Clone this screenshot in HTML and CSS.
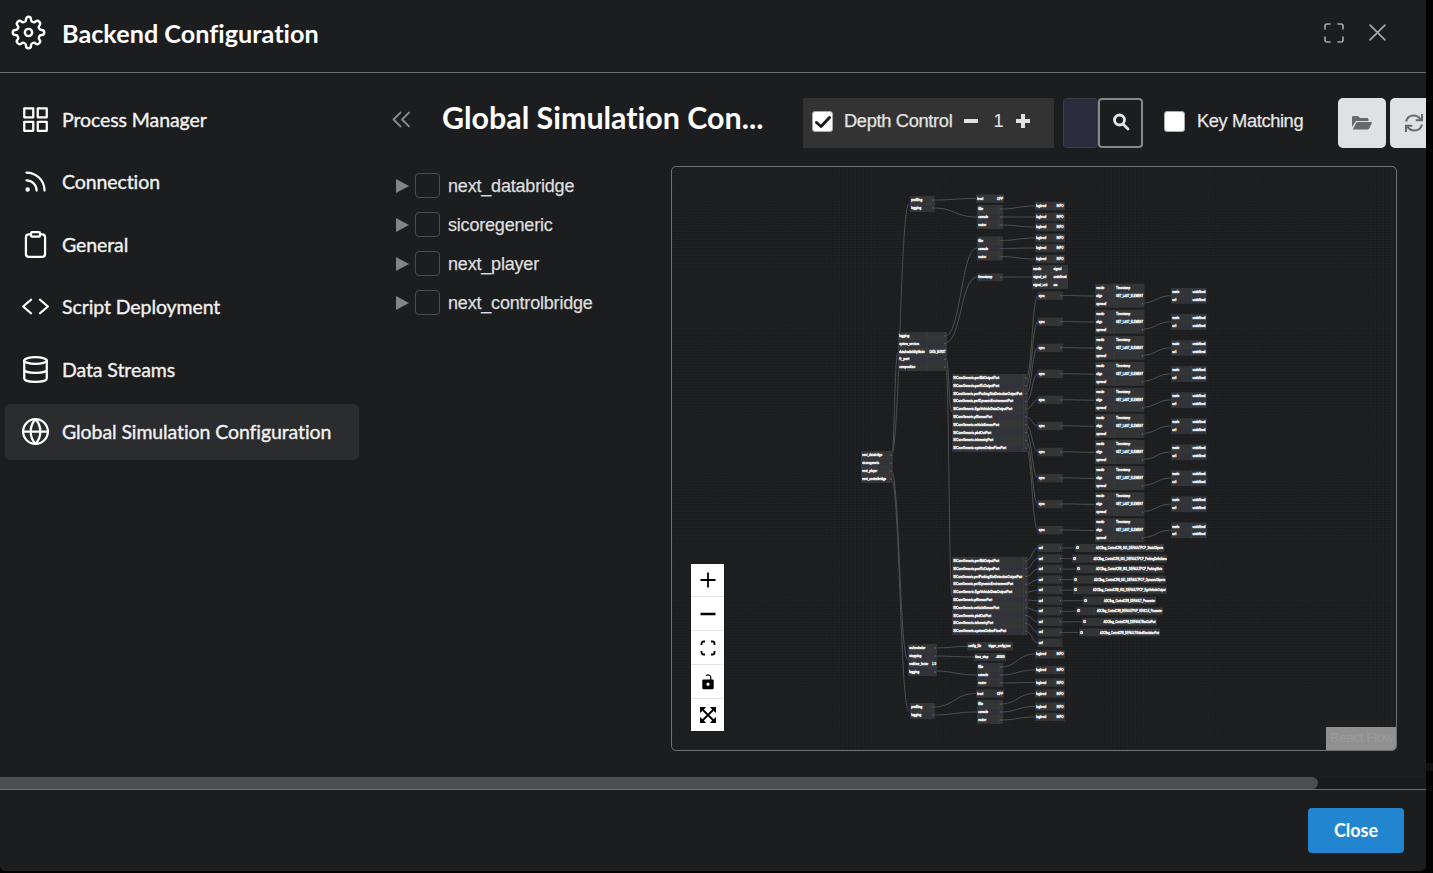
FILE: index.html
```html
<!DOCTYPE html>
<html lang="en">
<head>
<meta charset="utf-8">
<title>Backend Configuration</title>
<link rel="stylesheet" href="styles.css">
</head>
<body>
<div class="modal">
  <header class="modal-header">
    <svg class="gear" viewBox="0 0 24 24"><circle cx="12" cy="12" r="2.500"/><path d="M12 1.200c1 0 1.700.8 1.700 1.800 0 1.700 2 2.600 3.300 1.400 1.500-1.300 3.900 1 2.600 2.600C18.400 8.300 19.300 10.300 21 10.300c2.400 0 2.400 3.400 0 3.400-1.700 0-2.600 2-1.400 3.300 1.300 1.600-1 3.900-2.600 2.600-1.300-1.200-3.300-.3-3.300 1.400 0 2.400-3.400 2.400-3.400 0 0-1.700-2-2.600-3.300-1.400-1.600 1.300-3.900-1-2.600-2.600C5.600 15.700 4.700 13.700 3 13.700c-2.400 0-2.400-3.400 0-3.400 1.700 0 2.600-2 1.400-3.300C3.100 5.400 5.400 3.100 7 4.400 8.300 5.600 10.300 4.700 10.300 3c0-1 .7-1.800 1.700-1.800z"/></svg>
    <h1 class="modal-title">Backend Configuration</h1>
    <svg class="head-icon expand" viewBox="0 0 20 20"><path d="M1 6V3a2 2 0 0 1 2-2h3M14 1h3a2 2 0 0 1 2 2v3M19 14v3a2 2 0 0 1-2 2h-3M6 19H3a2 2 0 0 1-2-2v-3"/></svg>
    <svg class="head-icon close-x" viewBox="0 0 16 16"><path d="M1 1l14 14M15 1L1 15"/></svg>
  </header>

  <div class="modal-body">
    <nav class="sidebar">
      <a class="nav-item"><svg class="icon" viewBox="0 0 24 24"><path d="M2 2h8v8H2zM14 2h8v8h-8zM14 14h8v8h-8zM2 14h8v8H2z"/></svg><span>Process Manager</span></a>
      <a class="nav-item"><svg class="icon" viewBox="0 0 24 24"><path d="M4 11a9 9 0 0 1 9 9M4 4a16 16 0 0 1 16 16"/><circle cx="5" cy="19" r="1"/></svg><span>Connection</span></a>
      <a class="nav-item"><svg class="icon" viewBox="0 0 24 24"><path d="M16 3h2a2.500 2.500 0 0 1 2.500 2.500v15A2.500 2.500 0 0 1 18 23H6a2.500 2.500 0 0 1-2.500-2.500v-15A2.500 2.500 0 0 1 6 3h2"/><rect x="8" y="1" width="8" height="4" rx="1"/></svg><span>General</span></a>
      <a class="nav-item"><svg class="icon" viewBox="0 0 24 24"><path d="M16 18l7-6-7-6M8 6l-7 6 7 6"/></svg><span>Script Deployment</span></a>
      <a class="nav-item"><svg class="icon" viewBox="0 0 24 24"><ellipse cx="12" cy="4" rx="10" ry="3"/><path d="M22 12c0 1.660-4 3-10 3S2 13.660 2 12M2 4v16c0 1.660 4 3 10 3s10-1.340 10-3V4"/></svg><span>Data Streams</span></a>
      <a class="nav-item active"><svg class="icon" viewBox="0 0 24 24"><circle cx="12" cy="12" r="11"/><path d="M1 12h22M12 1c3 3.300 4.300 7 4.300 11s-1.300 7.700-4.300 11c-3-3.300-4.300-7-4.300-11S9 4.300 12 1z"/></svg><span>Global Simulation Configuration</span></a>
    </nav>

    <main class="content">
      <div class="toolbar">
        <svg class="collapse" viewBox="0 0 18 16"><path d="M8.500 1.500L2 8l6.500 6.500M16.500 1.500L10 8l6.500 6.500"/></svg>
        <h2 class="page-title">Global Simulation Con...</h2>
        <div class="depth">
          <span class="check"><svg viewBox="0 0 16 16"><path d="M1.500 8.500l4.500 4 8.500-9"/></svg></span>
          <span class="depth-label">Depth Control</span>
          <svg class="minus" viewBox="0 0 14 14"><path d="M0 7h14"/></svg>
          <span class="depth-value">1</span>
          <svg class="plus" viewBox="0 0 14 14"><path d="M0 7h14M7 0v14"/></svg>
        </div>
        <div class="search">
          <span class="search-input"></span>
          <span class="search-btn"><svg viewBox="0 0 18 18"><circle cx="7.500" cy="7" r="5"/><path d="M11 11l5 5"/></svg></span>
        </div>
        <span class="check key-check"></span>
        <span class="key-label">Key Matching</span>
        <button class="tool-btn"><svg class="folder" viewBox="0 0 20 14"><path d="M0 11V1.500C0 .6.600 0 1.500 0H6l2 2h7c.8 0 1.500.600 1.500 1.500V5H5.500C4.400 5 3.500 5.500 3 6.400z"/><path d="M.8 13.500L4 7c.3-.6.8-1 1.500-1H19c.8 0 1.200.700.800 1.300L17 12.700c-.3.500-.8.800-1.400.8z"/></svg></button>
        <button class="tool-btn"><svg class="sync" viewBox="0 0 20 20"><path d="M2 8.500C3 4.800 6 2.500 9.700 2.500c3 0 5.300 1.500 6.800 4M18 11.500c-1 3.700-4 6-7.700 6-3 0-5.300-1.500-6.800-4"/><path d="M18 1v6.300h-6.300M2 19v-6.300h6.300"/></svg></button>
      </div>

      <div class="workspace">
        <ul class="tree">
          <li class="tree-row"><i class="caret"></i><i class="box"></i><span>next_databridge</span></li>
          <li class="tree-row"><i class="caret"></i><i class="box"></i><span>sicoregeneric</span></li>
          <li class="tree-row"><i class="caret"></i><i class="box"></i><span>next_player</span></li>
          <li class="tree-row"><i class="caret"></i><i class="box"></i><span>next_controlbridge</span></li>
        </ul>
        <div class="flow">
          <svg class="graph" id="graph" viewBox="672 167 724 583"></svg>
          <div class="controls">
            <span class="control"><svg viewBox="0 0 16 16"><path class="line" d="M.500 8h15M8 .500v15"/></svg></span>
            <span class="control"><svg viewBox="0 0 16 16"><path class="line thick" d="M.500 8h15"/></svg></span>
            <span class="control"><svg viewBox="0 0 16 16"><path class="line" d="M1.500 5V3.500a2 2 0 0 1 2-2H5M11 1.500h1.500a2 2 0 0 1 2 2V5M14.500 11v1.500a2 2 0 0 1-2 2H11M5 14.500H3.500a2 2 0 0 1-2-2V11"/></svg></span>
            <span class="control"><svg viewBox="0 0 16 16"><path class="line thin" d="M6 1.500c3-1.500 4.800 0 4.800 2V6"/><path fill-rule="evenodd" d="M3.300 5.500h9.400a1 1 0 0 1 1 1v7.300a1.500 1.500 0 0 1-1.500 1.500H3.800a1.500 1.500 0 0 1-1.500-1.500V6.500a1 1 0 0 1 1-1zM8 8.600a1.600 1.600 0 1 0 0 3.200 1.600 1.600 0 0 0 0-3.200z"/></svg></span>
            <span class="control"><svg viewBox="0 0 16 16"><path class="line" d="M2.500 2.500l11 11M13.500 2.500l-11 11"/><path d="M0 0h6L4.300 2 2 4.300 0 6zM16 0v6l-2-1.700L11.700 2 10 0zM0 16v-6l2 1.700L4.300 14 6 16zM16 16h-6l1.700-2 2.300-2.300 2-1.700z"/></svg></span>
          </div>
          <span class="attribution">React Flow</span>
        </div>
      </div>
    </main>
  </div>

  <div class="scroll-track"><div class="scroll-thumb"></div></div>
  <footer class="modal-footer"><button class="close-btn">Close</button></footer>
</div>
<div class="page-edge"></div>
<script src="graph.js"></script>
</body>
</html>
```
FILE: styles.css
```css
* { box-sizing: border-box; }
body {
  margin: 0;
  width: 1433px;
  height: 873px;
  overflow: hidden;
  display: flex;
  background: #020203;
  color: #f2f2f2;
  font-family: Lato, sans-serif;
  font-variant-ligatures: none;
}
svg { fill: none; stroke: currentColor; stroke-linecap: round; stroke-linejoin: round; flex: none; }
h1, h2, ul { margin: 0; padding: 0; }
button { border: 0; padding: 0; font-family: inherit; }

.modal {
  width: 1426px;
  height: 871px;
  display: flex;
  flex-direction: column;
  overflow: hidden;
  background: #1c1d1f;
  border-radius: 0 0 5px 5px;
}
.page-edge { width: 7px; height: 8px; margin-top: 763px; background: #111112; }

.modal-header {
  height: 73px;
  flex: none;
  display: flex;
  align-items: center;
  padding: 0 40px 7px 11px;
  border-bottom: 1px solid #6e6f70;
}
.gear { width: 35px; height: 35px; stroke-width: 1.650; color: #fff; }
.modal-title { flex: 1; margin-left: 16px; font-size: 25.200px; line-height: 32px; letter-spacing: .020px; font-weight: 700; color: #fff; white-space: nowrap; }
.head-icon { color: #a6a7b4; stroke-width: 1.600; }
.expand { width: 20px; height: 20px; margin-right: 25px; }
.close-x { width: 17px; height: 17px; }

.modal-body { height: 704px; flex: none; display: flex; }
.sidebar { width: 359px; flex: none; padding: 18px 0 0 5px; display: flex; flex-direction: column; gap: 6.500px; }
.nav-item { height: 56px; display: flex; align-items: center; gap: 13px; padding-left: 17px; border-radius: 5px; font-size: 19.500px; letter-spacing: -.090px; -webkit-text-stroke: .350px currentColor; white-space: nowrap; }
.nav-item .icon { width: 27px; height: 27px; stroke-width: 2; color: #fff; }
.nav-item.active { background: #2b2c2e; }

.content { flex: 1; min-width: 0; padding: 25px 0 0 32px; overflow: hidden; font-family: "Liberation Sans", sans-serif; }
.toolbar { width: 1060px; height: 50px; display: flex; align-items: center; font-size: 18.300px; }
.toolbar > * { flex: none; }
.collapse { width: 20px; height: 17px; margin: 0 31px 8px 0; color: #8a8b8c; stroke-width: 1.800; }
.page-title { width: 361px; font-family: Lato, sans-serif; font-size: 30.400px; line-height: 40px; font-weight: 700; color: #fff; padding-bottom: 12px; white-space: nowrap; }
.depth { width: 251px; height: 50px; display: flex; align-items: center; padding: 0 24px 4px 9px; background: #333; color: #e3e3e3; }
.check { width: 21px; height: 21px; flex: none; display: flex; align-items: center; justify-content: center; background: #fff; border: 1px solid #aaa; border-radius: 3px; color: #1c1d1f; }
.depth .check { margin-top: 1px; }
.check svg { width: 16px; height: 16px; stroke-width: 3; }
.depth-label { width: 120px; margin-left: 11px; letter-spacing: -.340px; -webkit-text-stroke: .250px currentColor; white-space: nowrap; }
.minus, .plus { width: 14px; height: 14px; stroke-width: 4; stroke-linecap: butt; }
.depth-value { width: 38px; padding-left: 3px; text-align: center; }
.search { display: flex; margin-left: 9px; }
.search-input { width: 35px; height: 50px; background: #2b2d3f; border: 1px solid #3b3d48; border-radius: 4px; }
.search-btn { width: 45px; height: 50px; display: flex; align-items: center; justify-content: center; padding: 0 0 2px 0; border: 2px solid #888; border-radius: 4px; color: #e8e8e8; }
.search-btn svg { width: 18px; height: 18px; stroke-width: 2.800; }
.key-check { margin: 0 12px 4px 21px; }
.key-label { width: 141px; padding-bottom: 4px; letter-spacing: -.380px; -webkit-text-stroke: .250px currentColor; white-space: nowrap; color: #e6e6e6; }
.tool-btn { width: 48px; height: 50px; display: flex; align-items: center; justify-content: center; padding-bottom: 1px; margin-right: 4px; border-radius: 5px; background: #e0e1e2; color: #686969; }
.folder { width: 20px; height: 14px; fill: currentColor; stroke: none; }
.sync { width: 20px; height: 20px; stroke-width: 2.100; stroke-linecap: butt; stroke-linejoin: miter; }

.workspace { display: flex; margin-top: 18px; }
.tree { width: 280px; list-style: none; padding: 0 0 0 5px; }
.tree-row { height: 39px; display: flex; align-items: center; font-size: 18px; letter-spacing: -.190px; color: #dedede; }
.tree-row span { padding-top: 2px; -webkit-text-stroke: .250px currentColor; }
.caret { border-left: 13px solid #838484; border-top: 7px solid transparent; border-bottom: 7px solid transparent; margin-right: 6px; }
.box { width: 25px; height: 25px; margin-right: 8px; border: 1px solid #4b4c4e; border-radius: 4px; }

.flow {
  position: relative;
  width: 726px;
  height: 585px;
  border: 1px solid #707172;
  border-radius: 5px;
  overflow: hidden;
  background: #1b1c1e radial-gradient(circle at 1px 1px, #222325 .600px, transparent .900px) 0 0 / 2.650px 2.650px;
}
.graph { display: block; width: 724px; height: 583px; }
.graph text { font-family: "Liberation Sans", sans-serif; font-size: 4px; fill: #fff; stroke: #fff; stroke-width: .400px; }
.edge { stroke: #505153; stroke-width: 1; stroke-dasharray: 3 .800; }
.row-a { fill: #333435; stroke: none; }
.row-b { fill: #31323a; stroke: none; }
.divider { stroke: #424347; stroke-width: .500; }
.port { fill: #77787a; stroke: none; }

.controls { position: absolute; left: 19px; top: 397px; width: 33px; background: #fff; color: #000; }
.control { height: 34px; display: flex; align-items: center; justify-content: center; border-bottom: 1px solid #e6e6e6; }
.control:first-child { height: 33px; }
.control:last-child { height: 32px; border-bottom: 0; }
.control svg { width: 16px; height: 16px; fill: currentColor; stroke: none; overflow: visible; }
.control .line { fill: none; stroke: currentColor; stroke-width: 1.800; stroke-linecap: butt; }
.control .thick { stroke-width: 2.400; }
.control .thin { stroke-width: 1.200; }
.attribution { position: absolute; right: 0; bottom: 0; width: 70px; height: 23px; padding-left: 4px; background: #909090; color: #9b9b9b; font-size: 13.500px; letter-spacing: -.450px; line-height: 21px; white-space: nowrap; }

.scroll-track { height: 12px; flex: none; background: #191a1c; }
.scroll-thumb { width: 1318px; height: 12px; background: #4e4e4e; border-radius: 0 6px 6px 0; }
.modal-footer { flex: 1; display: flex; justify-content: flex-end; padding: 18px 22px 0 0; border-top: 1px solid #6e6f70; }
.close-btn { width: 96px; height: 45px; padding-bottom: 2px; border-radius: 4px; background: #2185d0; color: #fff; font-size: 18px; font-weight: 700; }
```
FILE: graph.js
```js
const svg = document.getElementById('graph');
const NS = 'http://www.w3.org/2000/svg';

function add(tag, attrs, text) {
  const el = document.createElementNS(NS, tag);
  for (const key in attrs) el.setAttribute(key, attrs[key]);
  if (text) el.textContent = text;
  svg.appendChild(el);
}

function label(text, x, y, width) {
  add('text', { x, y: y + 1.1, textLength: width, lengthAdjust: 'spacingAndGlyphs' }, text);
}

// rows: [key, keyWidth, value, valueX, valueWidth]
function node(x, y, w, h, rows, divider, ports = true) {
  const rh = h / rows.length;
  rows.forEach((row, i) => {
    const mid = y + rh * (i + 0.5);
    add('rect', { class: i % 2 ? 'row-b' : 'row-a', x, y: y + rh * i, width: w, height: rh });
    if (i) add('path', { class: 'divider', d: `M${x} ${y + rh * i}h${w}` });
    label(row[0], x + 1.2, mid, row[1]);
    if (row[2]) label(row[2], row[3], mid, row[4]);
    else if (ports) add('circle', { class: 'port', cx: x + w - 2, cy: mid, r: 0.7 });
  });
  if (divider) add('path', { class: 'divider', d: `M${divider} ${y}v${h}` });
}

function edge(x1, y1, x2, y2) {
  const m = (x1 + x2) / 2;
  add('path', { class: 'edge', d: `M${x1} ${y1}C${m} ${y1} ${m} ${y2} ${x2} ${y2}` });
}

edge(891, 455, 909, 204);
edge(891, 463, 898, 352);
edge(891, 470, 908, 660);
edge(891, 478, 909, 711);
edge(945, 336, 977, 248);
edge(945, 343, 977, 277);
edge(946, 359, 952, 412);
edge(946, 367, 952, 596);

node(861, 451, 32, 32, [['next_databridge', 20], ['sicoregeneric', 17], ['next_player', 15], ['next_controlbridge', 24]], 889.5);
node(898, 332, 49, 39, [['logging', 10], ['system_services', 20], ['dataAvailabilityMode', 25.5, 'DATA_BURST', 929.5, 16], ['fr_port', 10], ['composition', 16]], 927);

const stages = [['file', 5], ['console', 10], ['router', 8]];
function loggers(y, targets) {
  node(977, y, 26, 24, stages, 999);
  targets.forEach((ty, i) => {
    edge(1000, y + 4 + 8 * i, 1035, ty);
    node(1035, ty - 4.2, 30, 8.4, [['loglevel', 10, 'INFO', 1056.5, 7]], 1055);
  });
}
function profiling(y, levelY, stageY) {
  edge(933, y + 4, 976, levelY);
  edge(933, y + 12, 977, stageY);
  node(910, y, 25, 16, [['profiling', 11], ['logging', 10]], 931);
  node(976, levelY - 4.2, 28, 8.4, [['level', 6, 'OFF', 997, 6]]);
}
profiling(196, 198.5, 217);
loggers(205, [206, 217, 227]);
loggers(236.5, [238, 248, 259]);
edge(1000, 277, 1032, 277);
node(977, 273.3, 26, 8, [['timestamp', 14]], 999);
node(1032, 265, 36, 24, [['mode', 8, 'signal', 1053.5, 8], ['signal_url', 13, 'undefined', 1053.5, 13], ['signal_unit', 14, 'us', 1053.5, 4]], 1052);

const outputs = [
  ['SICoreGeneric.perfBitOutputPort', 46],
  ['SICoreGeneric.perfTcOutputPort', 46],
  ['SICoreGeneric.perfParkingSlotDetectionOutputPort', 69],
  ['SICoreGeneric.perfDynamicEnvironmentPort', 60],
  ['SICoreGeneric.EgoVehicleDataOutputPort', 59],
  ['SICoreGeneric.pfSensorPort', 39],
  ['SICoreGeneric.vehicleSensorPort', 46],
  ['SICoreGeneric.pbdOutPort', 38],
  ['SICoreGeneric.telemetryPort', 40],
  ['SICoreGeneric.systemOnlineFlowPort', 53]
];
for (let i = 0; i < 10; i++) edge(1026, 378 + 7.8 * i, 1038, 295.5 + 26.05 * i);
node(952, 374, 76, 78, outputs, 1023.5);
for (let i = 0; i < 10; i++) {
  const y = 296 + 26.05 * i;
  edge(1061, y - 0.5, 1095, y);
  edge(1142, y + 7, 1171, y - 0.2);
  node(1037.5, y - 4.5, 25.5, 8.4, [['sync', 6]], 1059);
  node(1095, y - 12.3, 49.5, 24, [['mode', 8, 'Timestamp', 1116, 14], ['align', 6, 'GET_LAST_ELEMENT', 1116, 27], ['xpresof', 10]], 1114);
  node(1171, y - 8, 36, 15.8, [['mode', 7, 'undefined', 1192.5, 13], ['url', 4, 'undefined', 1192.5, 13]], 1191.5);
}

// [node left, node right, text left, text width, value]
const urls = [
  [1075, 1164, 1096, 67, 'ADCBag_ControlCR8_001_DEFAULTPCP_StaticObjects'],
  [1072, 1167, 1093.5, 73, 'ADCBag_ControlCR8_001_DEFAULTPCP_ParkingDefinitions'],
  [1076, 1164, 1096, 66, 'ADCBag_ControlCR8_001_DEFAULTPCP_ParkingSlots'],
  [1073, 1166, 1094, 71, 'ADCBag_ControlCR8_001_DEFAULTPCP_DynamicObjects'],
  [1073, 1167, 1093, 72.5, 'ADCBag_ControlCR8_001_DEFAULTPCP_EgoVehicleOutput'],
  [1083, 1156, 1104, 51, 'ADCBag_ControlCR8_DEFAULT_Parameter'],
  [1076, 1163, 1097, 65, 'ADCBag_ControlCR8_DEFAULTPUP_VEHICLE_Parameter'],
  [1082, 1157, 1103.5, 52, 'ADCBag_ControlCR8_DEFAULTBoxOutPort'],
  [1079, 1160, 1100, 59, 'ADCBag_ControlCR8_DEFAULTGlobalSimulationPort']
];
for (let i = 0; i < 10; i++) edge(1026, 561 + 7.8 * i, 1038, 548 + 10.55 * i);
node(952, 557, 76, 78, outputs, 1023.5);
for (let i = 0; i < 10; i++) {
  const y = 548 + 10.55 * i;
  if (urls[i]) {
    const [l, r, tx, tw, value] = urls[i];
    edge(1060, y, l, y);
    node(l, y - 4, r - l, 8, [['0', 2.5, value, tx, tw]], tx - 3);
  }
  node(1037.5, y - 4.3, 25, 8.4, [['url', 4]], i < 9 ? 1059 : 0, i < 9);
}

edge(934, 648, 967, 646.5);
edge(934, 656, 974, 657);
edge(934, 671, 977, 675);
node(908, 644, 29, 32, [['orchestrator', 16], ['stepping', 12], ['realtime_factor', 19, '1.0', 932, 4], ['logging', 10]], 930);
node(967, 642, 46, 8.5, [['config_file', 13, 'trigger_config.json', 988.5, 22]]);
node(974, 653, 32, 8.2, [['time_step', 13, '-40000', 995.5, 9]]);
loggers(663, [654, 670, 682.5]);
profiling(703, 693.5, 712);
loggers(700, [693.5, 706.5, 717]);
```
